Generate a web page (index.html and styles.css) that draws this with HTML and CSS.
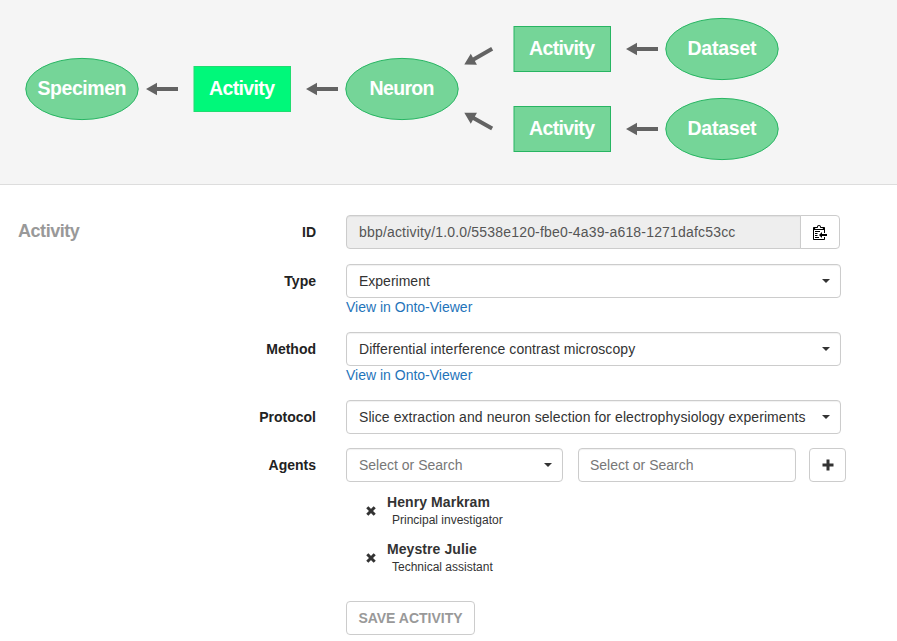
FILE: index.html
```html
<!DOCTYPE html>
<html lang="en">
<head>
<meta charset="utf-8">
<title>Activity</title>
<link rel="stylesheet" href="styles.css">
</head>
<body>
<header class="graph">
  <svg width="897" height="184" viewBox="0 0 897 184">
    <defs>
      <path id="arrow" d="M0 0 L11 -6.3 V-2 H32 V2 H11 V6.3 Z"/>
    </defs>
    <g class="node">
      <ellipse cx="82" cy="89" rx="56.2" ry="30.6"/>
      <rect class="active" x="194" y="66.5" width="96.5" height="45"/>
      <ellipse cx="402" cy="89" rx="56.2" ry="30.6"/>
      <rect x="514" y="26.5" width="96.5" height="45"/>
      <rect x="514" y="106.5" width="96.5" height="45"/>
      <ellipse cx="722" cy="49" rx="56.2" ry="30.6"/>
      <ellipse cx="722" cy="129" rx="56.2" ry="30.6"/>
    </g>
    <g class="edge">
      <use href="#arrow" x="146" y="89"/>
      <use href="#arrow" x="306" y="89"/>
      <use href="#arrow" x="626" y="49"/>
      <use href="#arrow" x="626" y="129"/>
      <use href="#arrow" transform="translate(464.3 64.6) rotate(-29.5)"/>
      <use href="#arrow" transform="translate(464.3 112.800) rotate(29.5)"/>
    </g>
    <g class="caption">
      <text x="82" y="95" textLength="89">Specimen</text>
      <text x="242" y="95" textLength="66">Activity</text>
      <text x="402" y="95" textLength="65">Neuron</text>
      <text x="562" y="55" textLength="66">Activity</text>
      <text x="562" y="135" textLength="66">Activity</text>
      <text x="722" y="55" textLength="69">Dataset</text>
      <text x="722" y="135" textLength="69">Dataset</text>
    </g>
  </svg>
</header>
<main class="editor">
  <h2 class="title">Activity</h2>
  <form class="form">
    <div class="row">
      <label class="label">ID</label>
      <div class="group">
        <div class="control readonly"><span class="id-text">bbp/activity/1.0.0/5538e120-fbe0-4a39-a618-1271dafc53cc</span></div>
        <button type="button" class="copy" aria-label="Copy">
          <svg width="14" height="16" viewBox="0 0 14 16" fill="currentColor"><path d="M2 13h4v1H2v-1zm5-6H2v1h5V7zm2 3V8l-3 3 3 3v-2h5v-2H9zM4.500 9H2v1h2.500V9zM2 12h2.500v-1H2v1zm9 1h1v2c-.02.28-.11.52-.3.700-.19.18-.42.280-.7.300H1c-.55 0-1-.45-1-1V4c0-.55.45-1 1-1h3c0-1.110.89-2 2-2 1.110 0 2 .89 2 2h3c.55 0 1 .45 1 1v5h-1V6H1v9h10v-2zM2 5h8c0-.55-.45-1-1-1H8c-.55 0-1-.45-1-1s-.45-1-1-1-1 .45-1 1-.45 1-1 1H3c-.55 0-1 .45-1 1z"/></svg>
        </button>
      </div>
    </div>
    <div class="row">
      <label class="label">Type</label>
      <div class="field">
        <div class="control"><span>Experiment</span><i class="caret"></i></div>
        <a class="link">View in Onto-Viewer</a>
      </div>
    </div>
    <div class="row">
      <label class="label">Method</label>
      <div class="field">
        <div class="control"><span class="long">Differential interference contrast microscopy</span><i class="caret"></i></div>
        <a class="link">View in Onto-Viewer</a>
      </div>
    </div>
    <div class="row tight">
      <label class="label">Protocol</label>
      <div class="field">
        <div class="control"><span class="long">Slice extraction and neuron selection for electrophysiology experiments</span><i class="caret"></i></div>
      </div>
    </div>
    <div class="row tight">
      <label class="label">Agents</label>
      <div class="agents">
        <div class="control hint"><span>Select or Search</span><i class="caret"></i></div>
        <div class="control hint search"><span>Select or Search</span></div>
        <button type="button" class="add" aria-label="Add"><svg width="12" height="12" viewBox="0 0 12 12"><path d="M6 .5V11.500M.5 6H11.500" stroke="currentColor" stroke-width="3"/></svg></button>
      </div>
    </div>
    <ul class="people">
      <li class="person">
        <svg class="remove" width="10" height="10" viewBox="0 0 10 10"><path d="M1.300 1.300L8.700 8.700M8.700 1.300L1.300 8.700" stroke="currentColor" stroke-width="3"/></svg>
        <div><div class="name">Henry Markram</div><div class="role">Principal investigator</div></div>
      </li>
      <li class="person">
        <svg class="remove" width="10" height="10" viewBox="0 0 10 10"><path d="M1.300 1.300L8.700 8.700M8.700 1.300L1.300 8.700" stroke="currentColor" stroke-width="3"/></svg>
        <div><div class="name">Meystre Julie</div><div class="role">Technical assistant</div></div>
      </li>
    </ul>
    <button type="button" class="save">SAVE ACTIVITY</button>
  </form>
</main>
</body>
</html>
```
FILE: styles.css
```css
* { box-sizing: border-box; }
body {
  margin: 0;
  background: #fff;
  color: #333;
  font: 14px/20px "Liberation Sans", Arial, sans-serif;
}
.graph { height: 185px; background: #f5f5f5; border-bottom: 1px solid #ddd; }
.graph svg { display: block; }
.node { fill: #75d598; stroke: #27b562; stroke-width: 1; }
.node .active { fill: #00f87a; stroke: #20dc70; }
.edge { fill: #636363; }
.caption { fill: #fff; font-size: 19.5px; font-weight: bold; text-anchor: middle; }
.editor { display: flex; padding: 30px 0 0 18px; }
.title { width: 212px; margin: 4px 0 0; font-size: 18px; line-height: 24px; letter-spacing: -.45px; color: #999; }
.form { width: 620px; }
.row { display: flex; margin-bottom: 15px; }
.row.tight { margin-bottom: 14px; }
.label { width: 86px; margin-right: 30px; padding-top: 7px; text-align: right; font-weight: bold; color: #222; }
.group { display: flex; width: 494px; }
.field { width: 495px; }
.control {
  display: flex;
  align-items: center;
  justify-content: space-between;
  height: 34px;
  padding: 0 10px 0 12px;
  border: 1px solid #ccc;
  border-radius: 4px;
  background: #fff;
  box-shadow: inset 0 1px 1px rgba(0, 0, 0, .06);
  white-space: nowrap;
}
.readonly { flex: 1; background: #eee; color: #555; border-radius: 4px 0 0 4px; }
.id-text { letter-spacing: .18px; }
.long { letter-spacing: .075px; }
.copy, .add, .save {
  display: flex;
  align-items: center;
  justify-content: center;
  height: 34px;
  padding: 0;
  border: 1px solid #ccc;
  border-radius: 4px;
  background: #fff;
  color: #333;
}
.copy { width: 40px; margin-left: -1px; border-radius: 0 4px 4px 0; color: #000; }
.caret { border: 4px solid transparent; border-top-color: #333; border-bottom: 0; }
.link { display: block; height: 19px; line-height: 19px; color: #1f74ba; }
.agents { display: grid; grid-template-columns: 217px 218px 37px; column-gap: 15px; }
.agents .add { margin-left: -2px; width: 37px; }
.hint { color: #777; }
.search { padding-left: 11px; }
.people { margin: 0 0 0 136px; padding: 0; list-style: none; }
.person { display: flex; height: 47px; }
.remove { margin: 10px 11px 0 0; }
.name { font-weight: bold; line-height: 20px; margin-top: -4px; letter-spacing: .08px; }
.role { margin-left: 5px; font-size: 12px; line-height: 16px; }
.save { width: 129px; margin: 11px 0 0 116px; color: #999; font: bold 14px "Liberation Sans", Arial, sans-serif; }
```
